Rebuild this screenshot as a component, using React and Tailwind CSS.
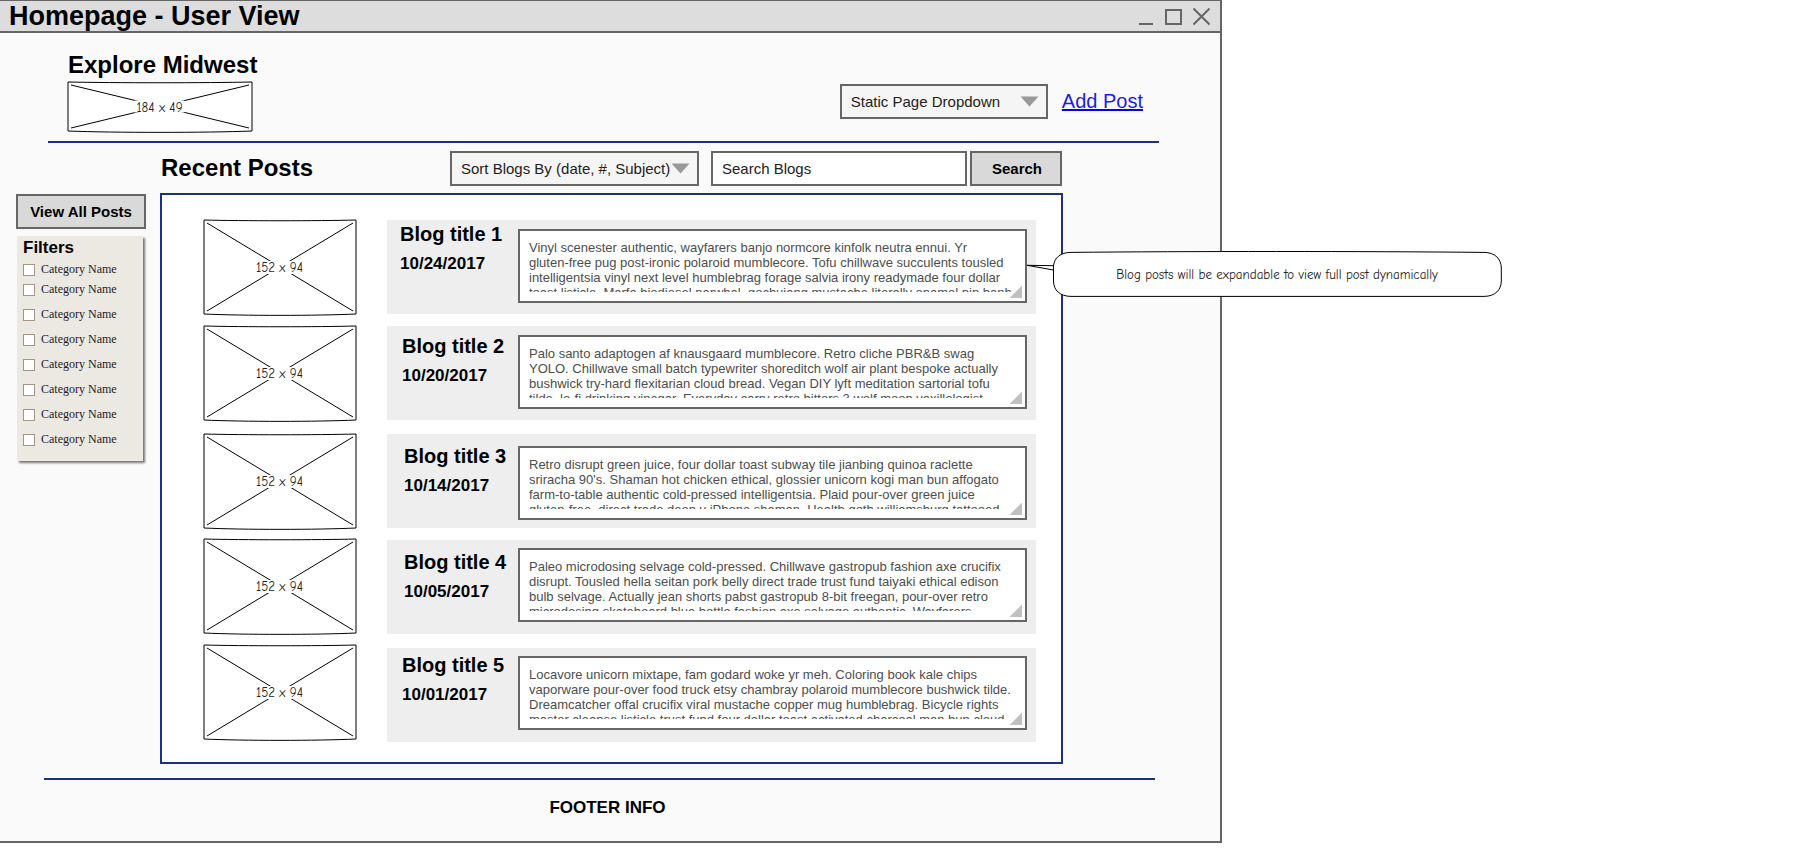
import React from 'react';

const posts = [
  {
    title: 'Blog title 1',
    date: '10/24/2017',
    row: '',
    image: '',
    heading: 'pt-0.5 pl-[13px]',
    excerpt: 'pt-[9px]',
    note: 'Blog posts will be expandable to view full post dynamically',
    text:
      'Vinyl scenester authentic, wayfarers banjo normcore kinfolk neutra ennui. Yr\ngluten-free pug post-ironic polaroid mumblecore. Tofu chillwave succulents tousled\nintelligentsia vinyl next level humblebrag forage salvia irony readymade four dollar\ntoast listicle. Marfa biodiesel narwhal, gochujang mustache literally enamel pin banh',
  },
  {
    title: 'Blog title 2',
    date: '10/20/2017',
    row: 'mt-3',
    image: '',
    heading: 'pt-2 pl-[15px]',
    excerpt: 'pt-[9px]',
    text:
      'Palo santo adaptogen af knausgaard mumblecore. Retro cliche PBR&B swag\nYOLO. Chillwave small batch typewriter shoreditch wolf air plant bespoke actually\nbushwick try-hard flexitarian cloud bread. Vegan DIY lyft meditation sartorial tofu\ntilde, lo-fi drinking vinegar. Everyday carry retro bitters 3 wolf moon vexillologist',
  },
  {
    title: 'Blog title 3',
    date: '10/14/2017',
    row: 'mt-3.5',
    image: '',
    heading: 'pt-2.5 pl-[17px]',
    excerpt: 'pt-3',
    text:
      "Retro disrupt green juice, four dollar toast subway tile jianbing quinoa raclette\nsriracha 90's. Shaman hot chicken ethical, glossier unicorn kogi man bun affogato\nfarm-to-table authentic cold-pressed intelligentsia. Plaid pour-over green juice\ngluten-free, direct trade deep v iPhone shaman. Health goth williamsburg tattooed",
  },
  {
    title: 'Blog title 4',
    date: '10/05/2017',
    row: 'mt-3',
    image: '-mt-px',
    heading: 'pt-2.5 pl-[17px]',
    excerpt: 'pt-2',
    text:
      'Paleo microdosing selvage cold-pressed. Chillwave gastropub fashion axe crucifix\ndisrupt. Tousled hella seitan pork belly direct trade trust fund taiyaki ethical edison\nbulb selvage. Actually jean shorts pabst gastropub 8-bit freegan, pour-over retro\nmicrodosing skateboard blue bottle fashion axe selvage authentic. Wayfarers',
  },
  {
    title: 'Blog title 5',
    date: '10/01/2017',
    row: 'mt-3.5',
    image: '-mt-[3px]',
    heading: 'pt-[5px] pl-[15px]',
    excerpt: 'pt-2',
    text:
      'Locavore unicorn mixtape, fam godard woke yr meh. Coloring book kale chips\nvaporware pour-over food truck etsy chambray polaroid mumblecore bushwick tilde.\nDreamcatcher offal crucifix viral mustache copper mug humblebrag. Bicycle rights\nmaster cleanse listicle trust fund four dollar toast activated charcoal man bun cloud',
  },
];

const filters = [1, 2, 3, 4, 5, 6, 7, 8];

const noteFont = "font-['Comic_Neue','Comic_Sans_MS','Noto_Sans',sans-serif]";

function Placeholder({ width, height, gap, gapHeight, label, className }) {
  const w = width + 3;
  const right = width + 1;
  const mid = w / 2 - 1;
  const cy = height / 2;
  const q = width / 4;
  return (
    <svg
      role="img"
      aria-label={label}
      width={w}
      height={height}
      viewBox={`0 0 ${w} ${height}`}
      className={`block shrink-0 overflow-visible ${className}`}
    >
      <path
        d={`M1 0C${1 + q} 1 ${right - q} 1 ${right} 0V${height}C${right - q} ${height + 1.8} ${1 + q} ${height + 1.8} 1 ${height}Z`}
        fill="#fff"
        stroke="#000"
        strokeLinejoin="round"
      />
      <path
        d={`M4 3L${right - 3} ${height - 3}M${right - 3} 3L4 ${height - 3}`}
        stroke="#000"
        strokeWidth="1"
      />
      <rect x={mid - gap / 2} y={cy - 6} width={gap} height={gapHeight} fill="#fff" />
      <text
        x={mid}
        y={cy + 5}
        textAnchor="middle"
        fill="#222"
        className={`text-[13px] ${noteFont}`}
      >
        {label}
      </text>
    </svg>
  );
}

function Dropdown({ label, width }) {
  return (
    <div className={`relative ${width}`}>
      <select
        aria-label={label}
        className="block h-[35px] w-full appearance-none border-2 border-[#666] bg-[#f5f5f5] pt-0.5 pr-5 pl-[9px] text-[15px] text-[#222]"
      >
        <option>{label}</option>
      </select>
      <svg
        aria-hidden="true"
        width="19"
        height="11"
        viewBox="0 0 19 11"
        className="pointer-events-none absolute top-3 right-[9px]"
      >
        <path d="M0.5 0.5H18.5L9.5 10.5Z" fill="#999" />
      </svg>
    </div>
  );
}

function Callout({ text }) {
  return (
    <div className="absolute top-[21px] left-full z-10 -ml-px h-12 w-[476px]">
      <svg aria-hidden="true" width="476" height="48" viewBox="0 0 476 48" className="block">
        <path
          d="M45 2.4C160 1.2 340 1.2 458 2.4C469 2.4 475.3 9 475.3 18V31C475.3 40 469 46.4 458 46.4H45C34 46.4 27.5 40 27.5 31V20L1 15.3L27.5 15.7C28.5 8 34 2.4 45 2.4Z"
          fill="#fff"
          stroke="#000"
          strokeWidth="1"
        />
        <path d="M27.5 15V21" stroke="#000" />
      </svg>
      <p
        className={`absolute inset-0 flex items-center justify-center pt-0.5 pl-[26px] text-[13px] text-[#222] ${noteFont}`}
      >
        {text}
      </p>
    </div>
  );
}

function Post({ post }) {
  return (
    <article className={`flex items-start ${post.row}`}>
      <Placeholder
        width={152}
        height={94}
        gap={50}
        gapHeight={13}
        label="152 x 94"
        className={post.image}
      />
      <div className="ml-[29px] flex h-[94px] min-w-0 flex-1 bg-[#eee] pr-[9px]">
        <div className={`w-[131px] shrink-0 font-bold whitespace-nowrap ${post.heading}`}>
          <h3 className="text-[20px] leading-6">{post.title}</h3>
          <p className="mt-2 text-[17px] leading-5">{post.date}</p>
        </div>
        <div className={`min-w-0 flex-1 ${post.excerpt}`}>
          <div className="relative">
            <div className="border-2 border-[#666] bg-white px-[9px] py-[9px]">
              <textarea
                aria-label={post.title}
                readOnly
                value={post.text}
                className="block h-[52px] w-full resize-none overflow-hidden text-[13px] leading-[15px] whitespace-pre text-[#4d4d4d]"
              />
            </div>
            <svg
              aria-hidden="true"
              width="13"
              height="13"
              viewBox="0 0 13 13"
              className="absolute right-1 bottom-1"
            >
              <path d="M12 0V12H0V11.5L11.5 0Z" fill="#c0c0c0" />
            </svg>
            {post.note && <Callout text={post.note} />}
          </div>
        </div>
      </div>
    </article>
  );
}

function TitleBar() {
  return (
    <div className="flex h-[33px] items-center justify-between border-t border-b-2 border-[#666] bg-[#ddd] pr-2.5 pl-[9px]">
      <p className="text-[27px] leading-[30px] font-bold">Homepage - User View</p>
      <div className="flex gap-[11px] pt-0.5">
        <button type="button" aria-label="Minimize" className="block">
          <svg width="16" height="18" viewBox="0 0 16 18">
            <path d="M1 16H15" stroke="#666" strokeWidth="2" />
          </svg>
        </button>
        <button type="button" aria-label="Maximize" className="block">
          <svg width="17" height="18" viewBox="0 0 17 18">
            <rect x="1" y="2" width="15" height="14" fill="none" stroke="#666" strokeWidth="2" />
          </svg>
        </button>
        <button type="button" aria-label="Close" className="block">
          <svg width="17" height="18" viewBox="0 0 17 18">
            <path d="M0.5 0.5L16.5 16.5M16.5 0.5L0.5 16.5" stroke="#666" strokeWidth="2" />
          </svg>
        </button>
      </div>
    </div>
  );
}

export default function App() {
  return (
    <div className="bg-white font-['Liberation_Sans',Arial,sans-serif] text-black">
      <div className="w-full max-w-[1222px] border-r-2 border-b-2 border-[#666] bg-[#fafafa]">
        <TitleBar />

        <header className="mr-[61px] ml-12 flex items-start justify-between border-b-2 border-[#1b3281] pt-[18px] pr-4 pb-2 pl-[19px]">
          <div>
            <h1 className="pl-px text-[24px] leading-[27px] font-bold">Explore Midwest</h1>
            <Placeholder
              width={184}
              height={49}
              gap={50}
              gapHeight={12}
              label="184 x 49"
              className="mt-1 mb-0.5"
            />
          </div>
          <nav className="mt-[33px] flex items-center gap-3.5">
            <Dropdown label="Static Page Dropdown" width="w-[208px]" />
            <a
              href="#add-post"
              className="pb-0.5 text-[20px] leading-6 text-[#1c1ce8] underline decoration-[#00f] decoration-2"
            >
              Add Post
            </a>
          </nav>
        </header>

        <div className="flex items-start pr-[157px]">
          <aside className="w-40 shrink-0 pt-[51px] pl-4">
            <button
              type="button"
              className="h-[35px] w-[130px] border-2 border-[#666] bg-[#d9d9d9] pt-px text-[15px] font-bold"
            >
              View All Posts
            </button>
            <fieldset className="mt-[7px] ml-px w-[126px] bg-[#ece9e2] pt-0.5 pb-3.5 pl-1.5 shadow-[2px_2px_2px_#777]">
              <h2 className="text-[17px] leading-5 font-bold">Filters</h2>
              <div className="mt-1 flex flex-col">
                {filters.map((n, i) => (
                  <label
                    key={n}
                    className={`flex h-[15px] items-center gap-1.5 font-['Liberation_Serif',serif] text-[12px] leading-[15px] text-[#222] ${
                      i === 0 ? '' : i === 1 ? 'mt-[5px]' : 'mt-2.5'
                    }`}
                  >
                    <input
                      type="checkbox"
                      className="size-3 appearance-none border border-[#a39684] bg-white"
                    />
                    Category Name
                  </label>
                ))}
              </div>
            </fieldset>
          </aside>

          <main className="min-w-0 flex-1">
            <div className="flex items-start pt-2 pr-px pb-[7px]">
              <h2 className="pt-[3px] pl-px text-[24px] leading-[27px] font-bold">Recent Posts</h2>
              <form className="ml-auto flex" onSubmit={(e) => e.preventDefault()}>
                <Dropdown label="Sort Blogs By (date, #, Subject)" width="w-[249px]" />
                <input
                  type="search"
                  aria-label="Search Blogs"
                  placeholder="Search Blogs"
                  className="ml-3 h-[35px] w-64 border-2 border-[#666] bg-white pl-[9px] text-[15px] placeholder:text-[#222]"
                />
                <button
                  type="submit"
                  className="ml-[3px] h-[35px] w-[92px] border-2 border-[#666] bg-[#d9d9d9] pt-px pl-0.5 text-[15px] font-bold"
                >
                  Search
                </button>
              </form>
            </div>

            <section className="border-2 border-[#1b3281] bg-white pt-[25px] pr-[25px] pb-5 pl-[41px]">
              {posts.map((post) => (
                <Post key={post.title} post={post} />
              ))}
            </section>
          </main>
        </div>

        <footer className="mt-3.5 mr-[65px] ml-11 border-t-2 border-[#1b3281] pt-[18px] pb-[23px] pl-4 text-center text-[17px] leading-5 font-bold">
          FOOTER INFO
        </footer>
      </div>
    </div>
  );
}
